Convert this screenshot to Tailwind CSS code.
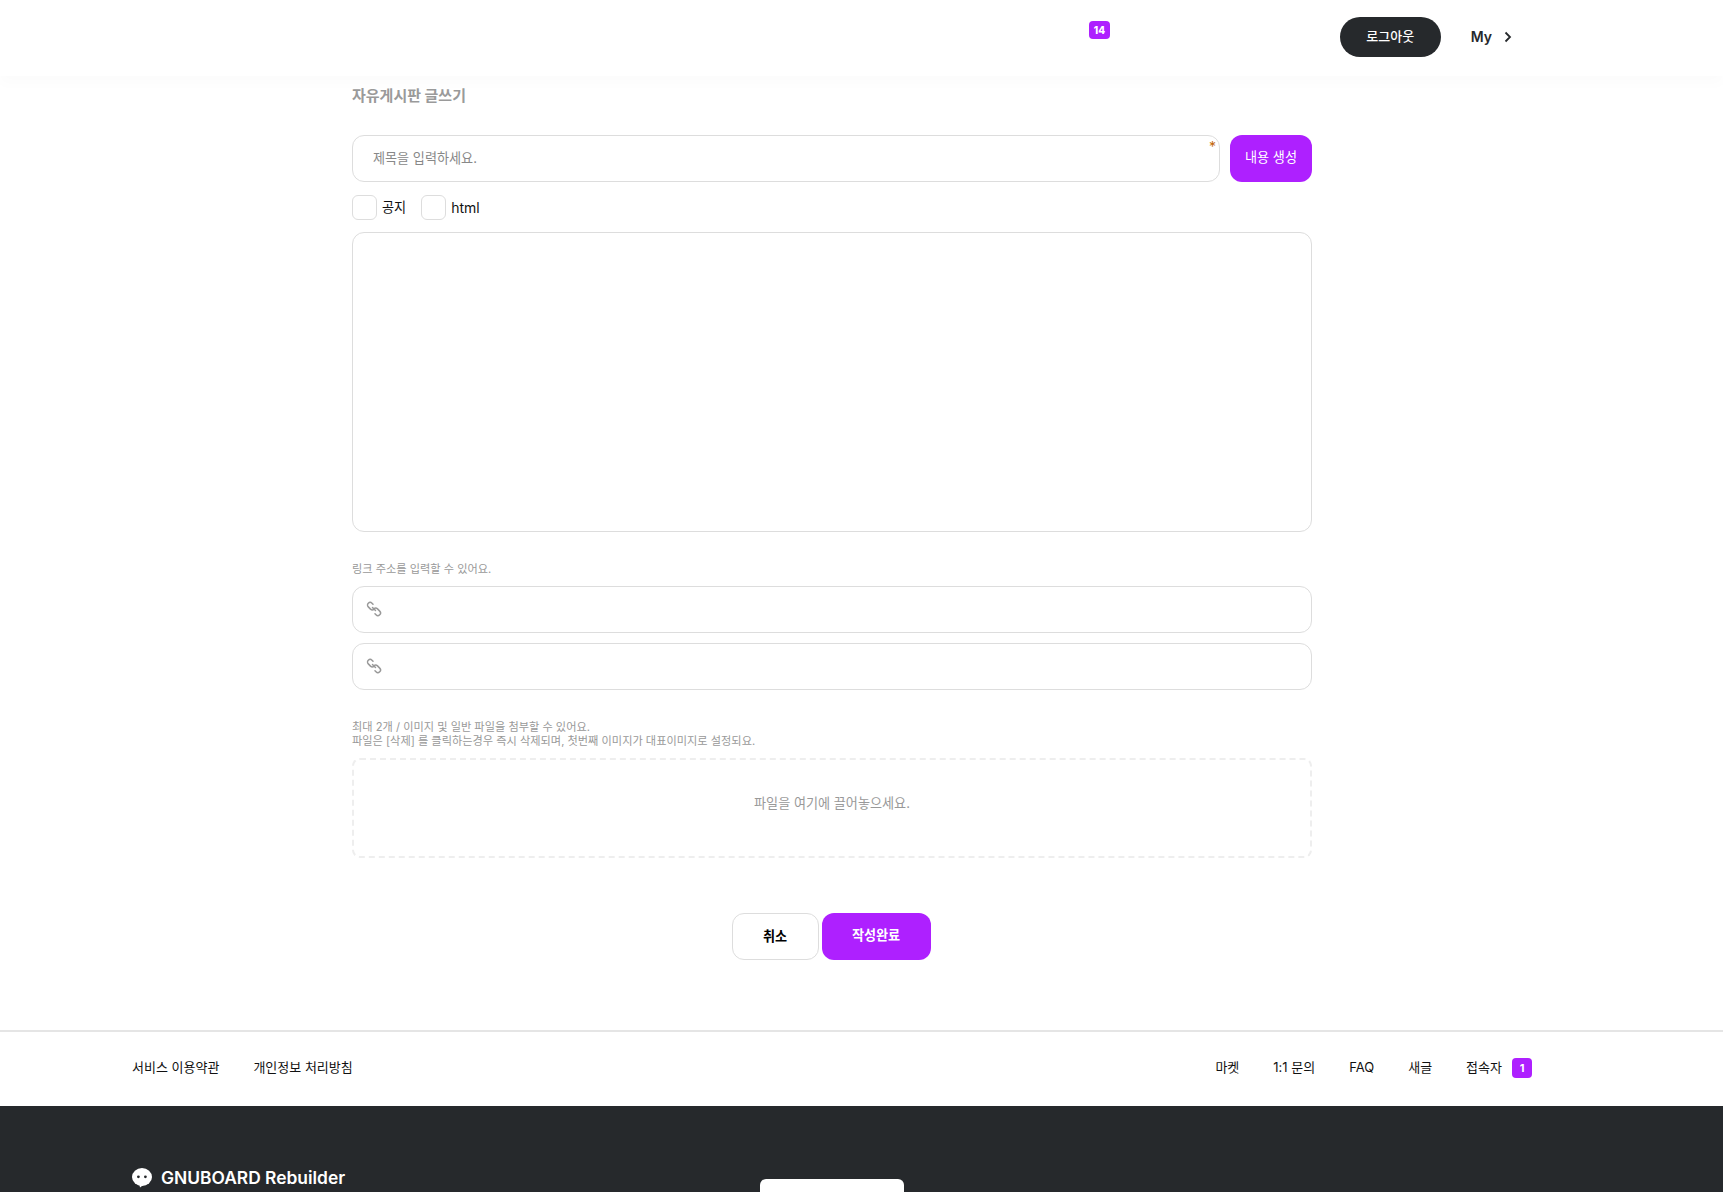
<!DOCTYPE html>
<html lang="ko">
<head>
    <meta charset="UTF-8">
    <meta name="viewport" content="width=device-width, initial-scale=1.0">
    <script src="https://cdn.jsdelivr.net/npm/@tailwindcss/browser@4"></script>
    <title>자유게시판 글쓰기</title>
</head>
<body class="bg-white font-['Inter','Noto_Sans_CJK_KR',sans-serif] text-[#111]">
<div class="h-[1192px] overflow-hidden flex flex-col">
    <!-- header -->
    <header class="relative h-[76px] shrink-0 bg-white flex items-center justify-end pr-[210px] shadow-[0_8px_12px_rgba(0,0,0,0.015)]">
        <span class="absolute left-[1089px] top-[21px] w-[21px] h-[18px] rounded-[4px] bg-[#ae20ff] text-white text-[10px] font-extrabold leading-[18px] text-center">14</span>
        <a class="w-[101px] h-[40px] rounded-full bg-[#26292c] text-white text-[13px] font-medium flex items-center justify-center mb-[2px]">로그아웃</a>
        <a class="ml-[30px] flex items-center text-[14px] font-semibold text-[#26292c] mb-[3px]">
            My
            <svg class="ml-[11px]" width="10" height="12" viewBox="0 0 10 12" fill="none" stroke="#26292c" stroke-width="1.8"><path d="M2.500 1.500 7 6l-4.500 4.500"/></svg>
        </a>
    </header>

    <!-- write form -->
    <main class="w-[960px] ml-[352px] shrink-0">
        <h2 class="mt-[10px] text-[15px] leading-[20px] font-bold text-[#9a9a9a]">자유게시판 글쓰기</h2>

        <div class="mt-[29px] flex gap-[10px]">
            <div class="relative flex-1 h-[47px] rounded-[12px] border border-[#dddddd] flex items-center pl-[20px] pt-[1px] text-[13.12px] text-[#888]">
                제목을 입력하세요.
                <span class="absolute right-[3px] top-[4px] text-[14px] leading-[14px] text-[#c2660a]">*</span>
            </div>
            <button class="w-[82px] h-[47px] rounded-[12px] bg-[#ae20ff] text-white text-[13.12px] pb-[1px]">내용 생성</button>
        </div>

        <div class="mt-[13px] flex items-center h-[25px] text-[13.12px]">
            <span class="w-[25px] h-[25px] rounded-[6px] border border-[#dddddd]"></span>
            <span class="ml-[5px]">공지</span>
            <span class="ml-[15px] w-[25px] h-[25px] rounded-[6px] border border-[#dddddd]"></span>
            <span class="ml-[5px] text-[14px] font-normal mb-[1px]">html</span>
        </div>

        <div class="mt-[12px] h-[300px] rounded-[12px] border border-[#dddddd]"></div>

        <p class="mt-[30px] text-[11.2px] leading-[14px] text-[#999]">링크 주소를 입력할 수 있어요.</p>
        <div class="mt-[10px] h-[47px] rounded-[12px] border border-[#dddddd] flex items-center pl-[13px] pb-[2px]">
            <svg width="16" height="16" viewBox="0 0 16 16" fill="none" stroke="#999" stroke-width="1.5" stroke-linecap="round"><path d="M7 3.200 6 2.200a2.600 2.600 0 0 0-3.700 3.700l2.200 2.200a2.600 2.600 0 0 0 3.600 0"/><path d="M9 12.800l1 1a2.600 2.600 0 0 0 3.700-3.700l-2.200-2.200a2.600 2.600 0 0 0-3.600 0"/><path d="M6.500 6.500l3 3"/></svg>
        </div>
        <div class="mt-[10px] h-[47px] rounded-[12px] border border-[#dddddd] flex items-center pl-[13px] pb-[2px]">
            <svg width="16" height="16" viewBox="0 0 16 16" fill="none" stroke="#999" stroke-width="1.5" stroke-linecap="round"><path d="M7 3.200 6 2.200a2.600 2.600 0 0 0-3.700 3.700l2.200 2.200a2.600 2.600 0 0 0 3.600 0"/><path d="M9 12.800l1 1a2.600 2.600 0 0 0 3.700-3.700l-2.200-2.200a2.600 2.600 0 0 0-3.600 0"/><path d="M6.500 6.500l3 3"/></svg>
        </div>

        <p class="mt-[30px] text-[11.2px] leading-[14px] text-[#999]">최대 2개 / 이미지 및 일반 파일을 첨부할 수 있어요.<br>파일은 [삭제] 를 클릭하는경우 즉시 삭제되며, 첫번째 이미지가 대표이미지로 설정되요.</p>
        <div class="mt-[10px] h-[100px] rounded-[8px] border-2 border-dashed border-[#eeeeee] flex items-start justify-center pt-[34px] text-[13.12px] leading-[18px] text-[#999]">파일을 여기에 끌어놓으세요.</div>

        <div class="mt-[55px] flex justify-center gap-[3px] pr-[2px]">
            <button class="w-[87px] h-[47px] rounded-[12px] border border-[#dddddd] text-[13.12px] font-bold text-black pt-[1px]">취소</button>
            <button class="w-[109px] h-[47px] rounded-[12px] bg-[#ae20ff] text-white text-[13.12px] font-bold pb-[1px]">작성완료</button>
        </div>
    </main>

    <!-- footer links -->
    <nav class="mt-[70px] h-[76px] shrink-0 border-t-2 border-[#e5e5e5] flex items-center justify-between pl-[132px] pr-[191px] pb-[2px] text-[13px]">
        <div class="flex gap-[34px]">
            <a>서비스 이용약관</a>
            <a>개인정보 처리방침</a>
        </div>
        <div class="flex items-center gap-[34px]">
            <a>마켓</a>
            <a>1:1 문의</a>
            <a>FAQ</a>
            <a>새글</a>
            <a class="flex items-center gap-[10px]">접속자 <span class="w-[20px] h-[20px] rounded-[4px] bg-[#ae20ff] text-white text-[11px] font-bold flex items-center justify-center">1</span></a>
        </div>
    </nav>

    <!-- dark footer -->
    <footer class="flex-1 bg-[#26292c] relative pl-[132px] pt-[60px]">
        <div class="flex items-center gap-[9px] text-white text-[17.400px] font-semibold leading-[24px]">
            <svg width="20" height="20" viewBox="0 0 20 20"><ellipse cx="10" cy="9" rx="10" ry="9" fill="#fff"/><path fill="#fff" d="M7 15l1 4.500 4-3z"/><circle cx="6.400" cy="8.800" r="1.400" fill="#26292c"/><circle cx="13.400" cy="8.800" r="1.400" fill="#26292c"/></svg>
            GNUBOARD Rebuilder
        </div>
        <div class="absolute left-[760px] top-[73px] w-[144px] h-[40px] rounded-[6px] bg-white"></div>
    </footer>
</div>
</body>
</html>
